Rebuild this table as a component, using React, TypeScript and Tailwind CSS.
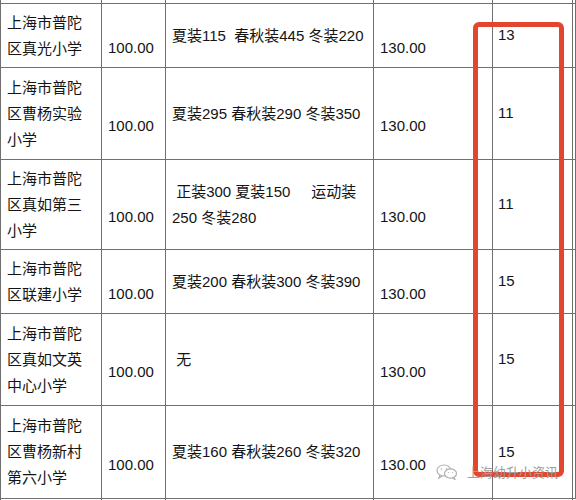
import React from "react";

type Row = {
  h: string;
  name: string[];
  uniform: string[];
  count: string;
};

const rows: Row[] = [
  { h: "h-[64px]", name: ["上海市普陀", "区真光小学"], uniform: ["夏装115  春秋装445 冬装220"], count: "13" },
  { h: "h-[92px]", name: ["上海市普陀", "区曹杨实验", "小学"], uniform: ["夏装295 春秋装290 冬装350"], count: "11" },
  { h: "h-[90px]", name: ["上海市普陀", "区真如第三", "小学"], uniform: [" 正装300 夏装150     运动装", "250 冬装280"], count: "11" },
  { h: "h-[64px]", name: ["上海市普陀", "区联建小学"], uniform: ["夏装200 春秋装300 冬装390"], count: "15" },
  { h: "h-[92px]", name: ["上海市普陀", "区真如文英", "中心小学"], uniform: [" 无"], count: "15" },
  { h: "h-[93px]", name: ["上海市普陀", "区曹杨新村", "第六小学"], uniform: ["夏装160 春秋装260 冬装320"], count: "15" },
];

const font = { fontFamily: '"Liberation Sans", "Noto Sans CJK SC", sans-serif' };

function WeChatIcon() {
  return (
    <svg width="22" height="16" viewBox="0 0 22 16" fill="none" stroke="#b0b0b0" strokeWidth="1.2">
      <ellipse cx="8" cy="6.5" rx="7" ry="5.5" />
      <path d="M4 11 L3 14 L6.5 11.8" />
      <ellipse cx="14.5" cy="9.5" rx="6" ry="4.6" fill="white" />
      <path d="M18 13.5 L19 15.5 L16.5 14" />
      <circle cx="5.5" cy="5" r="0.8" fill="#b0b0b0" stroke="none" />
      <circle cx="10.5" cy="5" r="0.8" fill="#b0b0b0" stroke="none" />
      <circle cx="12.5" cy="8.5" r="0.6" fill="#b0b0b0" stroke="none" />
      <circle cx="16.5" cy="8.5" r="0.6" fill="#b0b0b0" stroke="none" />
    </svg>
  );
}

const cols = "grid grid-cols-[101px_64px_208px_119px_80px_1fr]";
const cell = "border-r border-b border-[#6f6f6f]";

export default function App() {
  return (
    <div className="relative w-[576px] h-[500px] overflow-hidden bg-white text-[15px] text-[#141414]" style={font}>
      <div className="flex flex-col border-l border-[#6f6f6f]">
        <div className={`${cols} h-[4px]`}>
          <div className={cell} />
          <div className={cell} />
          <div className={cell} />
          <div className={cell} />
          <div className={cell} />
          <div className={cell} />
        </div>
        {rows.map((r, i) => (
          <div key={i} className={`${cols} ${r.h}`}>
            <div className={`${cell} flex flex-col justify-center pl-[6px] leading-[26px]`}>
              {r.name.map((l, j) => (
                <div key={j} className="whitespace-nowrap">{l}</div>
              ))}
            </div>
            <div className={`${cell} flex items-center pl-[6px] pt-[26px]`}>100.00</div>
            <div className={`${cell} flex flex-col justify-center pl-[6px] leading-[26px]`}>
              {r.uniform.map((l, j) => (
                <div key={j} className="whitespace-pre">{l}</div>
              ))}
            </div>
            <div className={`${cell} flex items-center pl-[6px] pt-[26px]`}>130.00</div>
            <div className={`${cell} flex items-center pl-[5px]`}>{r.count}</div>
            <div className={cell} />
          </div>
        ))}
        <div className={`${cols} h-[10px]`}>
          <div className="border-r border-[#6f6f6f]" />
          <div className="border-r border-[#6f6f6f]" />
          <div className="border-r border-[#6f6f6f]" />
          <div className="border-r border-[#6f6f6f]" />
          <div className="border-r border-[#6f6f6f]" />
          <div />
        </div>
      </div>

      <div className="absolute left-[473px] top-[22px] w-[91px] h-[455px] border-[5px] border-[#e2462f] rounded-[6px]" />

      <div className="absolute left-[436px] top-[464px] flex items-center gap-[9px]">
        <WeChatIcon />
        <span className="text-[13px] leading-[16px] text-[#9e9e9e]" style={{ fontFamily: '"Noto Sans CJK SC", sans-serif' }}>
          上海幼升小资讯
        </span>
      </div>
    </div>
  );
}
